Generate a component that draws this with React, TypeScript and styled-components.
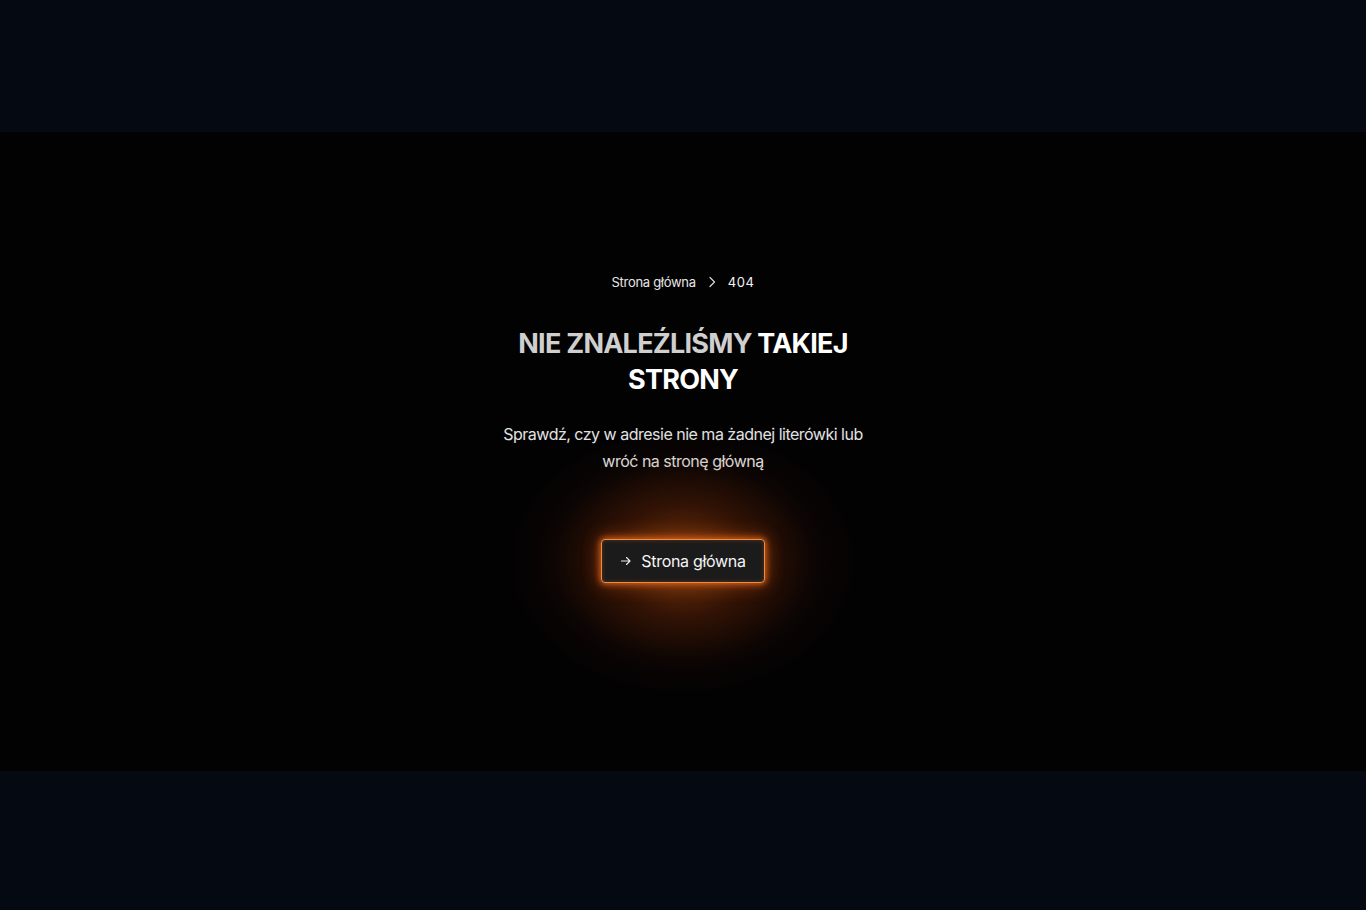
import styled, {createGlobalStyle} from 'styled-components';

const GlobalStyle = createGlobalStyle`
  html, body {
    margin: 0;
    padding: 0;
    background: #050912;
    font-family: Inter, "Noto Sans", sans-serif;
  }
`;

const Page = styled.div`
  display: flex;
  flex-direction: column;
  min-height: 910px;
`;

const Band = styled.div<{$height: number}>`
  height: ${p => p.$height}px;
  background: #050912;
`;

const Main = styled.main`
  height: 639px;
  background: #030203;
  display: flex;
  flex-direction: column;
  align-items: center;
  padding-top: 142px;
  box-sizing: border-box;
`;

const Crumbs = styled.nav`
  display: flex;
  align-items: center;
  gap: 12px;
  font-size: 13px;
  color: #e8e8e8;
`;

const Crumb = styled.span<{$current?: boolean}>`
  color: ${p => (p.$current ? '#f2f2f2' : '#e6e6e6')};
  letter-spacing: ${p => (p.$current ? '0.6px' : '-0.3px')};
`;

const Title = styled.h1`
  margin: 36px 0 0;
  width: 380px;
  text-align: center;
  font-size: 27px;
  line-height: 36px;
  font-weight: 700;
  letter-spacing: -0.75px;
  color: #ffffff;
`;

const Muted = styled.span`
  color: #cfcfcf;
`;

const Lead = styled.p`
  margin: 23px 0 0;
  width: 380px;
  text-align: center;
  font-size: 16px;
  line-height: 27px;
  color: #e2e2e2;
  letter-spacing: -0.5px;
`;

const GlowWrap = styled.div`
  margin-top: 64px;
  position: relative;
  display: flex;
  justify-content: center;

  &::before {
    content: '';
    position: absolute;
    left: 50%;
    top: 50%;
    width: 340px;
    height: 260px;
    transform: translate(-50%, -50%);
    background: radial-gradient(
      ellipse at center,
      rgba(240, 110, 20, 0.5) 0%,
      rgba(180, 65, 10, 0.27) 30%,
      rgba(95, 32, 5, 0.09) 55%,
      rgba(0, 0, 0, 0) 72%
    );
    pointer-events: none;
  }
`;

const HomeButton = styled.a`
  position: relative;
  display: flex;
  align-items: center;
  justify-content: center;
  gap: 9px;
  height: 44px;
  width: 164px;
  box-sizing: border-box;
  border-radius: 4px;
  background: #1c1b1b;
  border: 1.5px solid #f08a3c;
  box-shadow: 0 0 6px 1px rgba(240, 110, 30, 0.85), 0 0 18px 2px rgba(220, 90, 20, 0.45),
    inset 0 0 4px rgba(255, 140, 60, 0.25);
  color: #f4f4f4;
  font-size: 16px;
  letter-spacing: -0.3px;
  white-space: nowrap;
  text-decoration: none;
  cursor: pointer;
`;

const Arrow = styled.svg`
  width: 12px;
  height: 12px;
  flex: none;
`;

function Chevron() {
  return (
    <svg width="8" height="12" viewBox="0 0 8 12" fill="none">
      <path d="M2 1.5L6.5 6L2 10.5" stroke="#d8d8d8" strokeWidth="1.2" strokeLinecap="round" strokeLinejoin="round" />
    </svg>
  );
}

export default function App() {
  return (
    <>
      <GlobalStyle />
      <Page>
        <Band $height={132} />
        <Main>
          <Crumbs>
            <Crumb>Strona główna</Crumb>
            <Chevron />
            <Crumb $current>404</Crumb>
          </Crumbs>
          <Title>
            <Muted>NIE ZNALEŹLIŚMY</Muted> TAKIEJ STRONY
          </Title>
          <Lead>Sprawdź, czy w adresie nie ma żadnej literówki lub wróć na stronę główną</Lead>
          <GlowWrap>
            <HomeButton>
              <Arrow viewBox="0 0 12 12" fill="none">
                <path d="M1.5 6H10M6.5 2.5L10 6L6.5 9.5" stroke="#f0f0f0" strokeWidth="1.1" strokeLinecap="round" strokeLinejoin="round" />
              </Arrow>
              Strona główna
            </HomeButton>
          </GlowWrap>
        </Main>
        <Band $height={139} />
      </Page>
    </>
  );
}
